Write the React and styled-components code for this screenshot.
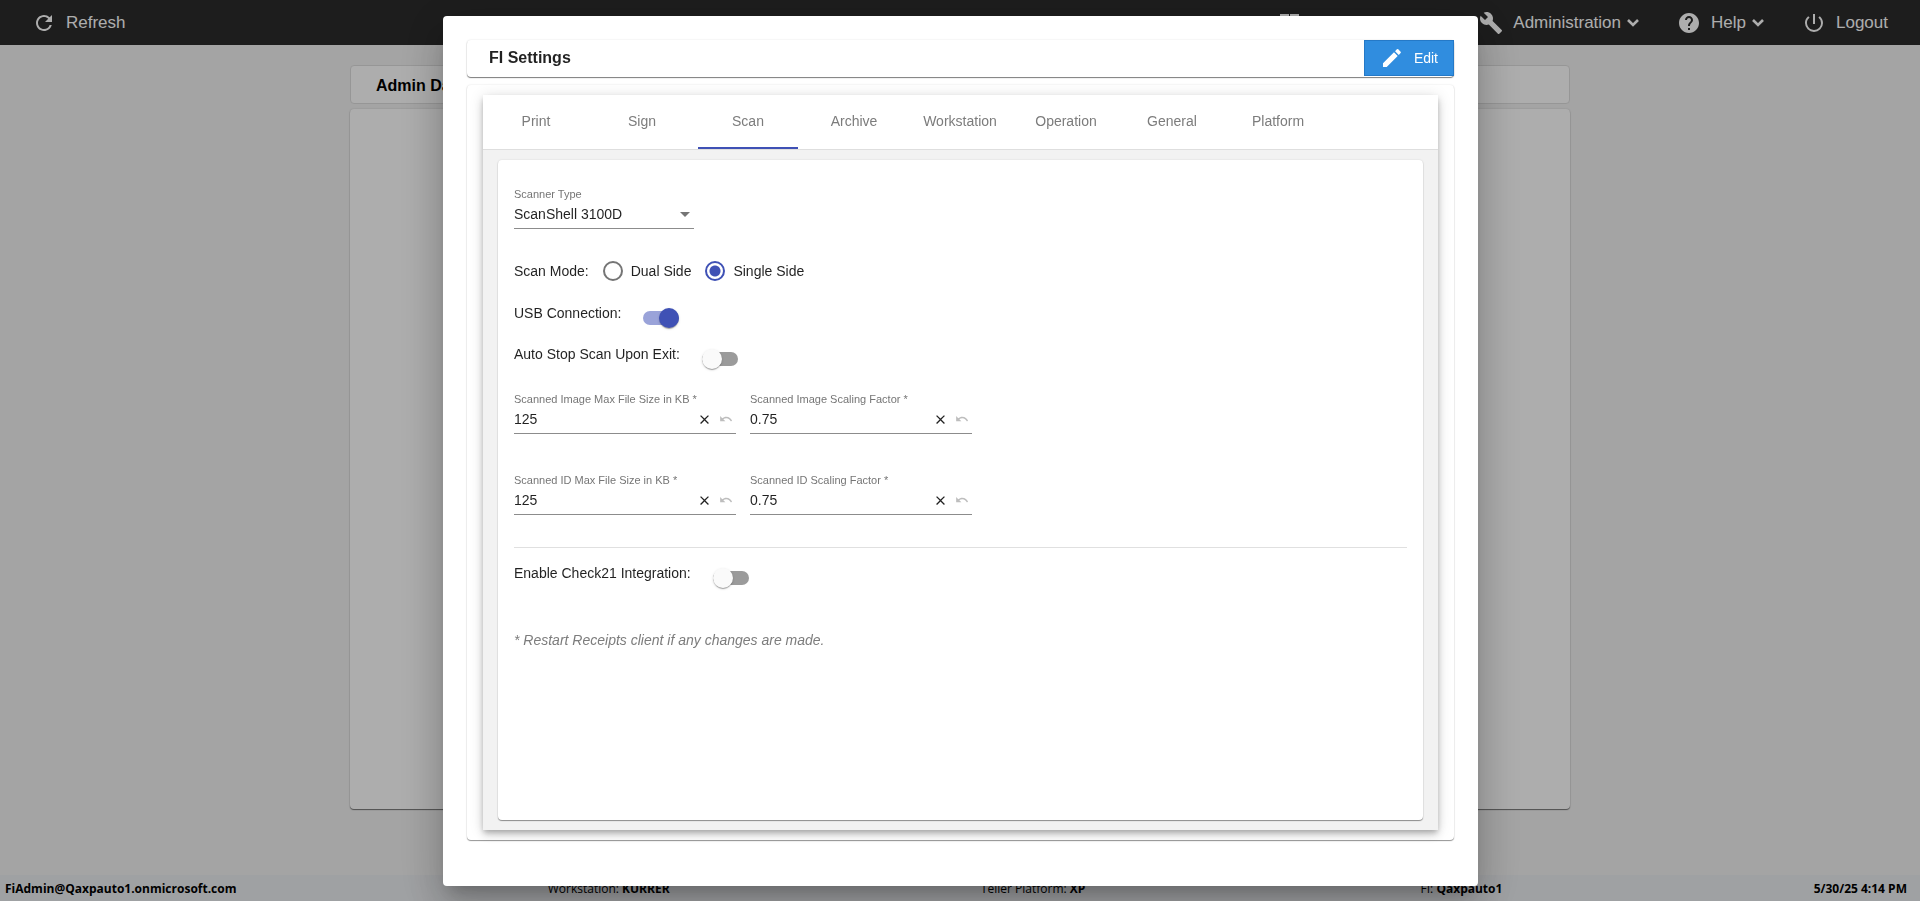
import React, { useState } from "react";
import styled, { createGlobalStyle } from "styled-components";
import {
  MdRefresh,
  MdPowerSettingsNew,
  MdEdit,
  MdClose,
  MdUndo,
  MdArrowDropDown,
} from "react-icons/md";

const GlobalStyle = createGlobalStyle`
  * {
    box-sizing: border-box;
  }

  body {
    margin: 0;
    background: #f2f2f2;
    font-family: "Liberation Sans", Arial, sans-serif;
    font-size: 14px;
    overflow: hidden;
  }

  button, input, select {
    font-family: inherit;
    font-size: inherit;
  }
`;

const Page = styled.div`
  display: flex;
  flex-direction: column;
  min-height: 100vh;
`;

const TopBar = styled.header`
  display: flex;
  justify-content: space-between;
  align-items: center;
  height: 45px;
  padding: 0 32px;
  background: #2b2b2b;
`;

const Nav = styled.nav`
  display: flex;
  align-items: center;
  gap: 38px;
`;

const NavItem = styled.button`
  display: flex;
  align-items: center;
  padding: 0;
  border: 0;
  background: none;
  color: #fff;
  font-size: 17px;
  line-height: 20px;

  span {
    margin-left: 10px;
  }
`;

const NavIcon = styled.svg.attrs({
  width: 24,
  height: 24,
  viewBox: "0 0 24 24",
  fill: "currentColor",
})``;

const ChevronIcon = styled.svg.attrs({
  width: 24,
  height: 24,
  viewBox: "0 0 24 24",
  fill: "none",
  stroke: "currentColor",
  strokeWidth: 2.6,
})`
  margin-right: -6px;
`;

const Main = styled.main`
  flex: 1;
  display: flex;
  flex-direction: column;
  gap: 5px;
  padding: 20px 350px 66px;
`;

const PageTitle = styled.h1`
  margin: 0;
  padding: 2px 25px 0;
  border: 1px solid #dedede;
  border-radius: 4px;
  background: #fff;
  font-size: 16px;
  line-height: 35px;
`;

const PageCard = styled.div`
  flex: 1;
  border-radius: 4px;
  background: #fff;
  box-shadow: 0 1px 1px rgba(0, 0, 0, 0.5), 0 0 2px rgba(0, 0, 0, 0.15);
`;

const Footer = styled.footer`
  display: flex;
  justify-content: space-between;
  height: 26px;
  padding: 0 13px 0 5px;
  background: #ebedf0;
  font-family: "Open Sans", "Noto Sans", sans-serif;
  font-size: 12px;
  line-height: 28px;
`;

const PlatformInfo = styled.span`
  padding-right: 24px;
`;

const Backdrop = styled.div`
  position: fixed;
  inset: 0;
  display: flex;
  padding: 16px 442px 15px 443px;
  background: rgba(0, 0, 0, 0.32);
`;

const Dialog = styled.section`
  flex: 1;
  display: flex;
  flex-direction: column;
  gap: 8px;
  padding: 24px 24px 46px;
  border-radius: 4px;
  background: #fff;
  color: rgba(0, 0, 0, 0.87);
  box-shadow: 0 11px 15px -7px rgba(0, 0, 0, 0.2),
    0 24px 38px 3px rgba(0, 0, 0, 0.14), 0 9px 46px 8px rgba(0, 0, 0, 0.12);
`;

const DialogHeader = styled.div`
  display: flex;
  justify-content: space-between;
  height: 37px;
  padding-left: 22px;
  border-radius: 4px;
  box-shadow: 0 1px 1px rgba(0, 0, 0, 0.5), 0 0 2px rgba(0, 0, 0, 0.12);
`;

const DialogTitle = styled.h2`
  margin: 0;
  font-size: 16px;
  line-height: 36px;
`;

const EditButton = styled.button`
  display: flex;
  align-items: center;
  gap: 10px;
  width: 90px;
  height: 36px;
  padding: 0 15px;
  border: 1px solid #2579c7;
  background: #308ddf;
  color: #fff;
`;

const Card = styled.div`
  flex: 1;
  display: flex;
  flex-direction: column;
  padding: ${(props) => props.$padding};
  border-radius: 4px;
  background: #fff;
  box-shadow: 0 1px 1px rgba(0, 0, 0, 0.4), 0 0 2px rgba(0, 0, 0, 0.12);
`;

const TabGroup = styled.div`
  flex: 1;
  display: flex;
  flex-direction: column;
  background: #f2f2f2;
  box-shadow: 0 3px 5px -1px rgba(0, 0, 0, 0.2),
    0 5px 8px rgba(0, 0, 0, 0.14), 0 1px 14px rgba(0, 0, 0, 0.12);
`;

const TabList = styled.div`
  display: flex;
  gap: 6px;
  padding: 0 3px;
  border-bottom: 1px solid #dedede;
  background: #fff;
`;

const Tab = styled.button`
  width: 100px;
  height: 54px;
  padding: 0 0 1px;
  border: 0;
  border-bottom: 2px solid ${(props) => (props.$active ? "#3f51b5" : "transparent")};
  background: none;
  color: #7c7c7c;
`;

const TabBody = styled.div`
  flex: 1;
  display: flex;
  padding: 10px 15px;
`;

const FieldRow = styled.div`
  display: flex;
  gap: 14px;
  margin-bottom: ${(props) => props.$space}px;
`;

const Field = styled.div`
  width: ${(props) => props.$width}px;
  border-bottom: 1px solid #8c8c8c;
`;

const FieldLabel = styled.label`
  display: block;
  color: #757575;
  font-size: 11px;
  line-height: 14px;
`;

const FieldControl = styled.div`
  display: flex;
  align-items: center;
  height: 27px;
  padding-bottom: 1px;
`;

const Select = styled.select`
  flex: 1;
  min-width: 0;
  height: 26px;
  padding: 0;
  border: 0;
  appearance: none;
  background: none;
  color: inherit;
`;

const SelectArrow = styled(MdArrowDropDown)`
  margin-right: -3px;
  color: #757575;
`;

const Input = styled.input`
  flex: 1;
  min-width: 0;
  height: 26px;
  padding: 0;
  border: 0;
  background: none;
  color: inherit;
`;

const IconButton = styled.button`
  display: flex;
  justify-content: center;
  width: 21px;
  padding: 0;
  border: 0;
  background: none;
  color: #222;

  &:disabled {
    color: #bdbdbd;
  }
`;

const RadioRow = styled.fieldset`
  display: flex;
  align-items: center;
  margin: 0 0 22px;
  padding: 2px 0 0;
  border: 0;
`;

const RadioLabel = styled.label`
  display: flex;
  align-items: center;
  gap: 8px;
  margin-left: 14px;
`;

const Radio = styled.input`
  appearance: none;
  width: 20px;
  height: 20px;
  margin: 0;
  border: 2px solid #757575;
  border-radius: 50%;

  &:checked {
    border-color: #3f51b5;
    background: radial-gradient(circle, #3f51b5 5px, #fff 6px);
  }
`;

const ToggleGroup = styled.div`
  padding-bottom: 7px;
`;

const ToggleRow = styled.label`
  display: flex;
  align-items: flex-start;
  gap: 22px;
  height: 41px;
  line-height: 20px;
`;

const Switch = styled.input`
  appearance: none;
  display: flex;
  align-items: center;
  width: 36px;
  height: 14px;
  margin: 8px 0 0;
  border-radius: 8px;
  background: ${(props) => (props.checked ? "#9aa3d9" : "#9b9b9b")};

  &::before {
    content: "";
    width: 20px;
    height: 20px;
    flex: none;
    margin-left: ${(props) => (props.checked ? "16px" : "0")};
    border-radius: 50%;
    background: ${(props) => (props.checked ? "#3f51b5" : "#fafafa")};
    box-shadow: 0 2px 1px -1px rgba(0, 0, 0, 0.2),
      0 1px 1px rgba(0, 0, 0, 0.14), 0 1px 3px rgba(0, 0, 0, 0.12);
  }
`;

const Divider = styled.hr`
  width: 100%;
  margin: 0 0 15px;
  border: 0;
  border-top: 1px solid #e0e0e0;
`;

const Note = styled.p`
  margin: 28px 0 0;
  color: #7c7c7c;
  font-style: italic;
  line-height: 16px;
`;

const tabs = [
  "Print",
  "Sign",
  "Scan",
  "Archive",
  "Workstation",
  "Operation",
  "General",
  "Platform",
];

const Chevron = () => (
  <ChevronIcon>
    <path d="M7 9l5 5 5-5" />
  </ChevronIcon>
);

const NumberField = ({ id, label, initial }) => {
  const [value, setValue] = useState(initial);

  return (
    <Field $width={222}>
      <FieldLabel htmlFor={id}>{label} *</FieldLabel>
      <FieldControl>
        <Input
          id={id}
          value={value}
          onChange={(e) => setValue(e.target.value)}
        />
        <IconButton aria-label="Clear" onClick={() => setValue("")}>
          <MdClose size={15} />
        </IconButton>
        <IconButton
          aria-label="Undo"
          disabled={value === initial}
          onClick={() => setValue(initial)}
        >
          <MdUndo size={14} />
        </IconButton>
      </FieldControl>
    </Field>
  );
};

const Toggle = ({ label, initial = false }) => {
  const [on, setOn] = useState(initial);

  return (
    <ToggleRow>
      {label}
      <Switch
        type="checkbox"
        role="switch"
        checked={on}
        onChange={() => setOn(!on)}
      />
    </ToggleRow>
  );
};

const ScanSettings = () => {
  const [mode, setMode] = useState("Single Side");

  return (
    <Card $padding="27px 16px">
      <FieldRow $space={30}>
        <Field $width={180}>
          <FieldLabel htmlFor="scanner">Scanner Type</FieldLabel>
          <FieldControl>
            <Select id="scanner">
              <option>ScanShell 3100D</option>
            </Select>
            <SelectArrow size={24} />
          </FieldControl>
        </Field>
      </FieldRow>
      <RadioRow>
        Scan Mode:
        {["Dual Side", "Single Side"].map((name) => (
          <RadioLabel key={name}>
            <Radio
              type="radio"
              name="mode"
              checked={mode === name}
              onChange={() => setMode(name)}
            />
            {name}
          </RadioLabel>
        ))}
      </RadioRow>
      <ToggleGroup>
        <Toggle label="USB Connection:" initial />
        <Toggle label="Auto Stop Scan Upon Exit:" />
      </ToggleGroup>
      <FieldRow $space={39}>
        <NumberField
          id="imageSize"
          label="Scanned Image Max File Size in KB"
          initial="125"
        />
        <NumberField
          id="imageScale"
          label="Scanned Image Scaling Factor"
          initial="0.75"
        />
      </FieldRow>
      <FieldRow $space={32}>
        <NumberField
          id="idSize"
          label="Scanned ID Max File Size in KB"
          initial="125"
        />
        <NumberField
          id="idScale"
          label="Scanned ID Scaling Factor"
          initial="0.75"
        />
      </FieldRow>
      <Divider />
      <Toggle label="Enable Check21 Integration:" />
      <Note>* Restart Receipts client if any changes are made.</Note>
    </Card>
  );
};

const App = () => {
  const [tab, setTab] = useState("Scan");

  return (
    <>
      <GlobalStyle />
      <Page>
        <TopBar>
          <NavItem>
            <MdRefresh size={24} />
            <span>Refresh</span>
          </NavItem>
          <Nav>
            <NavItem>
              <NavIcon>
                <path d="M1 3h9v8H1zM11 3h9v8h-9zM1 12h9v9H1zM11 12h9v9h-9z" />
              </NavIcon>
              <span>My Dashboard</span>
              <Chevron />
            </NavItem>
            <NavItem>
              <NavIcon>
                <path d="M22.7 19l-9.1-9.1c.9-2.3.4-5-1.5-6.9-2-2-5-2.4-7.4-1.3L9 6 6 9 1.6 4.7C.4 7.1.9 10.1 2.9 12.1c1.9 1.9 4.6 2.4 6.9 1.5l9.1 9.1c.4.4 1 .4 1.4 0l2.3-2.3c.5-.4.5-1.1.1-1.4z" />
              </NavIcon>
              <span>Administration</span>
              <Chevron />
            </NavItem>
            <NavItem>
              <NavIcon>
                <path d="M12 2C6.48 2 2 6.48 2 12s4.48 10 10 10 10-4.48 10-10S17.52 2 12 2zm1 17h-2v-2h2v2zm2.07-7.75l-.9.92C13.45 12.9 13 13.5 13 15h-2v-.5c0-1.1.45-2.1 1.17-2.83l1.24-1.26c.37-.36.59-.86.59-1.41 0-1.1-.9-2-2-2s-2 .9-2 2H8c0-2.21 1.79-4 4-4s4 1.79 4 4c0 .88-.36 1.68-.93 2.25z" />
              </NavIcon>
              <span>Help</span>
              <Chevron />
            </NavItem>
            <NavItem>
              <MdPowerSettingsNew size={24} />
              <span>Logout</span>
            </NavItem>
          </Nav>
        </TopBar>
        <Main>
          <PageTitle>Admin Dashboard</PageTitle>
          <PageCard />
        </Main>
        <Footer>
          <b>FiAdmin@Qaxpauto1.onmicrosoft.com</b>
          <span>
            Workstation: <b>KURRER</b>
          </span>
          <PlatformInfo>
            Teller Platform: <b>XP</b>
          </PlatformInfo>
          <span>
            FI: <b>Qaxpauto1</b>
          </span>
          <b>5/30/25 4:14 PM</b>
        </Footer>
      </Page>
      <Backdrop>
        <Dialog role="dialog" aria-labelledby="dialogTitle">
          <DialogHeader>
            <DialogTitle id="dialogTitle">FI Settings</DialogTitle>
            <EditButton>
              <MdEdit size={24} />
              Edit
            </EditButton>
          </DialogHeader>
          <Card $padding="10px 16px">
            <TabGroup>
              <TabList role="tablist">
                {tabs.map((name) => (
                  <Tab
                    key={name}
                    role="tab"
                    aria-selected={tab === name}
                    $active={tab === name}
                    onClick={() => setTab(name)}
                  >
                    {name}
                  </Tab>
                ))}
              </TabList>
              <TabBody>{tab === "Scan" && <ScanSettings />}</TabBody>
            </TabGroup>
          </Card>
        </Dialog>
      </Backdrop>
    </>
  );
};

export default App;
